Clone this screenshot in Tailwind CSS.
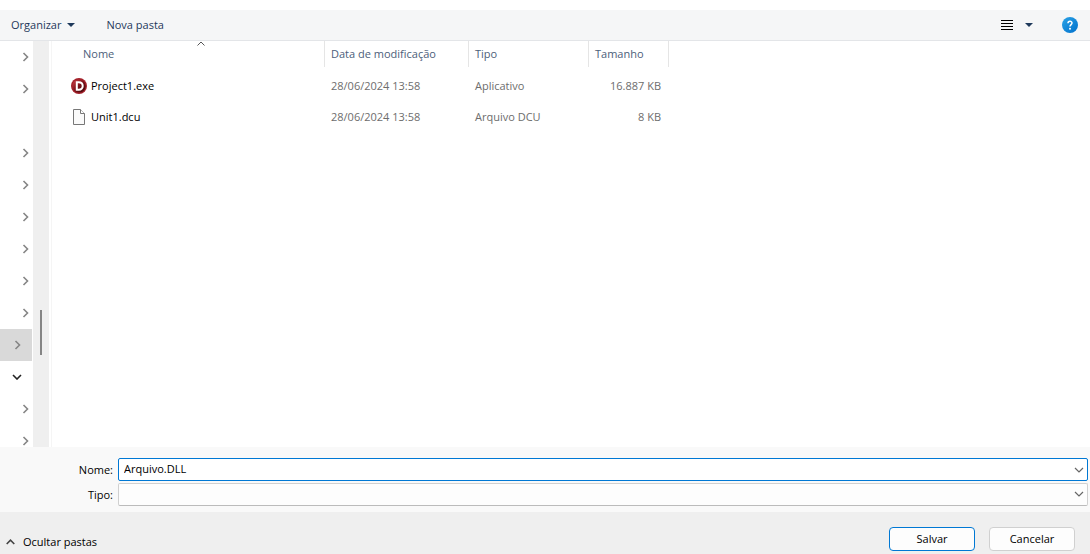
<!DOCTYPE html>
<html lang="pt-BR">
<head>
<meta charset="utf-8">
<title>Salvar como</title>
<script src="https://cdn.jsdelivr.net/npm/@tailwindcss/browser@4"></script>
</head>
<body class="bg-white text-black text-[11px] leading-4 font-['Segoe_UI','Open_Sans','Noto_Sans',sans-serif]">
<svg class="hidden">
  <symbol id="right" viewBox="0 0 8 10"><path d="M1.5 1l4 4-4 4" fill="none" stroke="currentColor" stroke-width="1.6"/></symbol>
  <symbol id="down" viewBox="0 0 10 6"><path d="M1 1l4 4 4-4" fill="none" stroke="currentColor" stroke-width="1.2"/></symbol>
</svg>
<div class="flex flex-col h-screen pt-2.5 overflow-hidden">
  <header class="flex items-center h-[31px] shrink-0 bg-[#f5f6f7] border-b border-[#e3e5e8] text-[#1e395b] pl-[11px] pr-3">
    <button class="flex items-center gap-1.5">Organizar
      <svg class="w-2 h-1" viewBox="0 0 8 4"><path d="M0 0h8L4 4z" fill="currentColor"/></svg>
    </button>
    <button class="ml-[31px]">Nova pasta</button>
    <button class="ml-auto" aria-label="Modo de exibição">
      <svg class="w-3 h-3 block" viewBox="0 0 12 12" shape-rendering="crispEdges"><path d="M0 1.5h12M0 4.5h12M0 7.5h12M0 10.5h12" stroke="#000"/></svg>
    </button>
    <button class="ml-3" aria-label="Mais opções">
      <svg class="w-2 h-1 block" viewBox="0 0 8 4"><path d="M0 0h8L4 4z" fill="currentColor"/></svg>
    </button>
    <button class="ml-[29px]" aria-label="Ajuda">
      <svg class="w-4 h-4 block" viewBox="0 0 16 16"><defs><linearGradient id="h" x2="1" y2="1"><stop stop-color="#2ba3e6"/><stop offset="1" stop-color="#0070cc"/></linearGradient></defs><circle cx="8" cy="8" r="8" fill="url(#h)"/><path d="M6 6.2C6 3.7 10 3.7 10 6.1 10 7.6 8 7.7 8 9.6" fill="none" stroke="#fff" stroke-width="1.5"/><circle cx="8" cy="11.7" r="1" fill="#fff"/></svg>
    </button>
  </header>

  <main class="flex flex-1 min-h-0 overflow-hidden">
    <nav aria-label="Pastas" class="w-[33px] shrink-0 pr-px text-[#858585]">
      <button aria-label="Expandir" class="flex w-full h-8 items-center justify-end pr-0.5"><svg class="w-2 h-2.5"><use href="#right"/></svg></button>
      <button aria-label="Expandir" class="flex w-full h-8 items-center justify-end pr-0.5"><svg class="w-2 h-2.5"><use href="#right"/></svg></button>
      <div class="h-8"></div>
      <button aria-label="Expandir" class="flex w-full h-8 items-center justify-end pr-0.5"><svg class="w-2 h-2.5"><use href="#right"/></svg></button>
      <button aria-label="Expandir" class="flex w-full h-8 items-center justify-end pr-0.5"><svg class="w-2 h-2.5"><use href="#right"/></svg></button>
      <button aria-label="Expandir" class="flex w-full h-8 items-center justify-end pr-0.5"><svg class="w-2 h-2.5"><use href="#right"/></svg></button>
      <button aria-label="Expandir" class="flex w-full h-8 items-center justify-end pr-0.5"><svg class="w-2 h-2.5"><use href="#right"/></svg></button>
      <button aria-label="Expandir" class="flex w-full h-8 items-center justify-end pr-0.5"><svg class="w-2 h-2.5"><use href="#right"/></svg></button>
      <button aria-label="Expandir" class="flex w-full h-8 items-center justify-end pr-0.5"><svg class="w-2 h-2.5"><use href="#right"/></svg></button>
      <button aria-label="Expandir" class="flex w-full h-8 items-center justify-end pr-2.5 bg-[#d9d9d9]"><svg class="w-2 h-2.5"><use href="#right"/></svg></button>
      <button aria-label="Recolher" class="flex w-full h-8 items-center justify-end pr-2.5 text-[#222]"><svg class="w-2.5 h-1.5" viewBox="0 0 10 6"><path d="M1 1l4 4 4-4" fill="none" stroke="currentColor" stroke-width="1.6"/></svg></button>
      <button aria-label="Expandir" class="flex w-full h-8 items-center justify-end pr-0.5"><svg class="w-2 h-2.5"><use href="#right"/></svg></button>
      <button aria-label="Expandir" class="flex w-full h-8 items-center justify-end pr-0.5"><svg class="w-2 h-2.5"><use href="#right"/></svg></button>
    </nav>
    <div class="w-4 shrink-0 bg-[#efefef]"><div class="w-0.5 h-[45px] ml-[7px] mt-[269px] bg-[#858585]"></div></div>
    <section class="flex-1 ml-0.5 border-l border-[#f5f5f5]">
      <table class="table-fixed w-[617px] text-left text-[#6d6d6d]">
        <colgroup><col class="w-[273px]"><col class="w-36"><col class="w-[120px]"><col class="w-20"></colgroup>
        <thead class="text-[#4c607a]">
          <tr class="h-[29px] align-top">
            <th class="p-0 font-normal"><div class="relative h-[26px] leading-[26px] pl-[31px] border-r border-[#e5e5e5]">Nome<svg class="absolute left-[145px] top-0 w-2 h-[5px] text-[#555]" viewBox="0 0 8 5"><path d="M.5 4.5L4 1l3.5 3.5" fill="none" stroke="currentColor"/></svg></div></th>
            <th class="p-0 font-normal"><div class="h-[26px] leading-[26px] pl-1.5 border-r border-[#e5e5e5]">Data de modificação</div></th>
            <th class="p-0 font-normal"><div class="h-[26px] leading-[26px] pl-1.5 border-r border-[#e5e5e5]">Tipo</div></th>
            <th class="p-0 font-normal"><div class="h-[26px] leading-[26px] pl-1.5 border-r border-[#e5e5e5]">Tamanho</div></th>
          </tr>
        </thead>
        <tbody>
          <tr class="h-[31px]">
            <td class="p-0 pl-[19px] text-black"><div class="flex items-center gap-1">
              <svg class="w-4 h-4" viewBox="0 0 16 16"><defs><linearGradient id="d" x2="1" y2="1"><stop stop-color="#d8434b"/><stop offset=".5" stop-color="#7a1219"/><stop offset="1" stop-color="#3a0508"/></linearGradient></defs><circle cx="8" cy="8" r="8" fill="#a3202a"/><circle cx="8" cy="8" r="6.6" fill="url(#d)"/><path d="M5.8 4.2h2c5.2 0 5.2 7.6 0 7.6h-2z" fill="none" stroke="#fff" stroke-width="2"/></svg>Project1.exe</div></td>
            <td class="p-0 pl-1.5">28/06/2024 13:58</td><td class="p-0 pl-1.5">Aplicativo</td><td class="p-0 pr-2 text-right">16.887 KB</td>
          </tr>
          <tr class="h-[31px]">
            <td class="p-0 pl-[19px] text-black"><div class="flex items-center gap-1">
              <svg class="w-4 h-4" viewBox="0 0 16 16"><path d="M2.5.5h7l4 4v11h-11z" fill="#fafafa" stroke="#777"/><path d="M9.5.5v4h4" fill="#fff" stroke="#777"/></svg>Unit1.dcu</div></td>
            <td class="p-0 pl-1.5">28/06/2024 13:58</td><td class="p-0 pl-1.5">Arquivo DCU</td><td class="p-0 pr-2 text-right">8 KB</td>
          </tr>
        </tbody>
      </table>
    </section>
  </main>

  <form class="shrink-0 bg-[#f9f9f9] pt-[11px] pb-1.5 pr-0.5 flex flex-col gap-0.5">
    <div class="flex items-center">
      <label for="nome" class="w-[118px] pr-[5px] text-right">Nome:</label>
      <div class="flex flex-1 h-[23px] bg-white border border-[#0078d4] rounded-xs">
        <input id="nome" value="Arquivo.DLL" class="flex-1 pl-[5px] pb-0.5 outline-none">
        <button type="button" aria-label="Mostrar nomes" class="w-[17px] flex items-center justify-center text-[#666]"><svg class="w-2.5 h-1.5"><use href="#down"/></svg></button>
      </div>
    </div>
    <div class="flex items-center">
      <label for="tipo" class="w-[118px] pr-[5px] text-right">Tipo:</label>
      <div class="relative flex flex-1 h-[23px]">
        <select id="tipo" class="w-full appearance-none bg-[#fdfdfd] border border-[#d0d0d0] border-b-[#bbb] rounded-xs"><option></option></select>
        <svg class="absolute right-1 top-2 w-2.5 h-1.5 text-[#666] pointer-events-none"><use href="#down"/></svg>
      </div>
    </div>
  </form>
  <footer class="shrink-0 flex items-start h-[42px] bg-[#efefef] pl-1.5 pr-[15px] pt-[15px]">
    <button class="flex items-center gap-2 h-[30px]"><svg class="w-[9px] h-1.5" viewBox="0 0 9 6"><path d="M.7 5l3.8-3.8L8.3 5" fill="none" stroke="#444" stroke-width="1.6"/></svg>Ocultar pastas</button>
    <button class="ml-auto w-[86px] h-6 bg-[#fdfdfd] border border-[#0078d4] rounded">Salvar</button>
    <button class="ml-3.5 w-[86px] h-6 bg-[#fdfdfd] border border-[#d0d0d0] rounded">Cancelar</button>
  </footer>
</div>
</body>
</html>
